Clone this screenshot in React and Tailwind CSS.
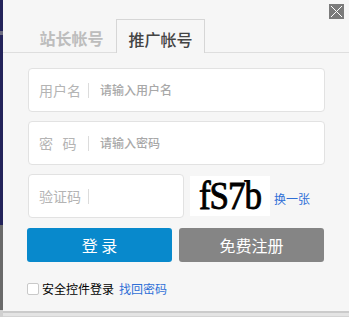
const cjk = { fontFamily: '"Noto Sans CJK SC", "Noto Sans", sans-serif' };

function Field({ label, placeholder, wide = true }) {
  return (
    <div
      className={`flex items-center h-[44px] bg-white border border-[#e2e2e2] rounded-[4px] ${wide ? 'w-[297px]' : 'w-[156px]'}`}
    >
      <span className="w-[59px] pl-[10px] text-[14px] text-[#b4b4b4] leading-none whitespace-pre">
        {label}
      </span>
      <span className="w-px h-[15px] bg-[#dcdcdc]" />
      {placeholder && (
        <span className="ml-[11px] text-[12px] font-medium text-[#a8a8a8] leading-none">{placeholder}</span>
      )}
    </div>
  );
}

export default function App() {
  return (
    <div className="flex w-[349px] h-[317px] bg-[#f6f6f6] overflow-hidden" style={cjk}>
      {/* left edge of the page behind the dialog */}
      <div className="w-[3px] flex flex-col shrink-0">
        <div className="h-[31px] bg-[#23235a]" />
        <div className="h-[4px] bg-[#6b6b80]" />
        <div className="h-[190px] bg-[#23235a]" />
        <div className="h-[85px] bg-[#6a6a6a]" />
        <div className="flex-1 bg-[#d0d0d0]" />
      </div>

      <div className="relative flex-1 flex flex-col">
        {/* close button */}
        <button className="absolute top-[4px] right-[5px] w-[15px] h-[15px] bg-[#7b7b7b]">
          <svg width="15" height="15" viewBox="0 0 15 15" className="block">
            <path d="M2 2L13 13M13 2L2 13" stroke="#fff" strokeWidth="1" fill="none" />
          </svg>
        </button>

        {/* tabs */}
        <div className="flex items-end h-[53px] pl-[24px] border-b border-[#dedede] pt-[19px]">
          <div className="w-[89px] h-[33px] flex items-center justify-center pt-[4px] text-[16px] font-bold text-[#bdbdbd]">
            站长帐号
          </div>
          <div className="w-[89px] h-[34px] -mb-px flex items-center justify-center pt-[4px] text-[16px] font-medium text-[#444] border border-b-0 border-[#d6d6d6] bg-[#f6f6f6]">
            推广帐号
          </div>
        </div>

        <div className="flex flex-col pl-[25px] pt-[15px]">
          <Field label="用户名" placeholder="请输入用户名" />
          <div className="h-[9px]" />
          <Field label={'密   码'} placeholder="请输入密码" />
          <div className="h-[9px]" />
          <div className="flex items-center">
            <Field label="验证码" wide={false} />
            <div className="ml-[6px] w-[80px] h-[40px] bg-white flex items-center justify-center">
              <span
                className="inline-block text-[35px] font-normal text-black leading-none tracking-[-1px] scale-y-[1.12] pt-[1px] [-webkit-text-stroke:0.8px_black]"
                style={{ fontFamily: '"Liberation Serif", serif' }}
              >
                fS7b
              </span>
            </div>
            <span className="ml-[4px] mt-[5px] text-[12px] text-[#2f6fd6]">换一张</span>
          </div>
        </div>

        <div className="flex pl-[24px] pt-[10px] gap-[7px]">
          <button className="w-[145px] h-[34px] bg-[#0889cc] rounded-[3px] text-white text-[16px] leading-none">
            登 录
          </button>
          <button className="w-[145px] h-[34px] bg-[#858585] rounded-[3px] text-white text-[16px] leading-none">
            免费注册
          </button>
        </div>

        <div className="flex items-center pl-[24px] pt-[18px]">
          <span className="w-[12px] h-[12px] border border-[#c9c9c9] rounded-[2px] bg-white" />
          <span className="ml-[3px] text-[12px] text-black">安全控件登录</span>
          <span className="ml-[5px] text-[12px] text-[#2f6fd6]">找回密码</span>
        </div>

        <div className="mt-auto h-[6px] border-t-2 border-[#cbcbcb] bg-[#e4e4e4] border-b border-b-[#d4d4d4]" />
      </div>
    </div>
  );
}
